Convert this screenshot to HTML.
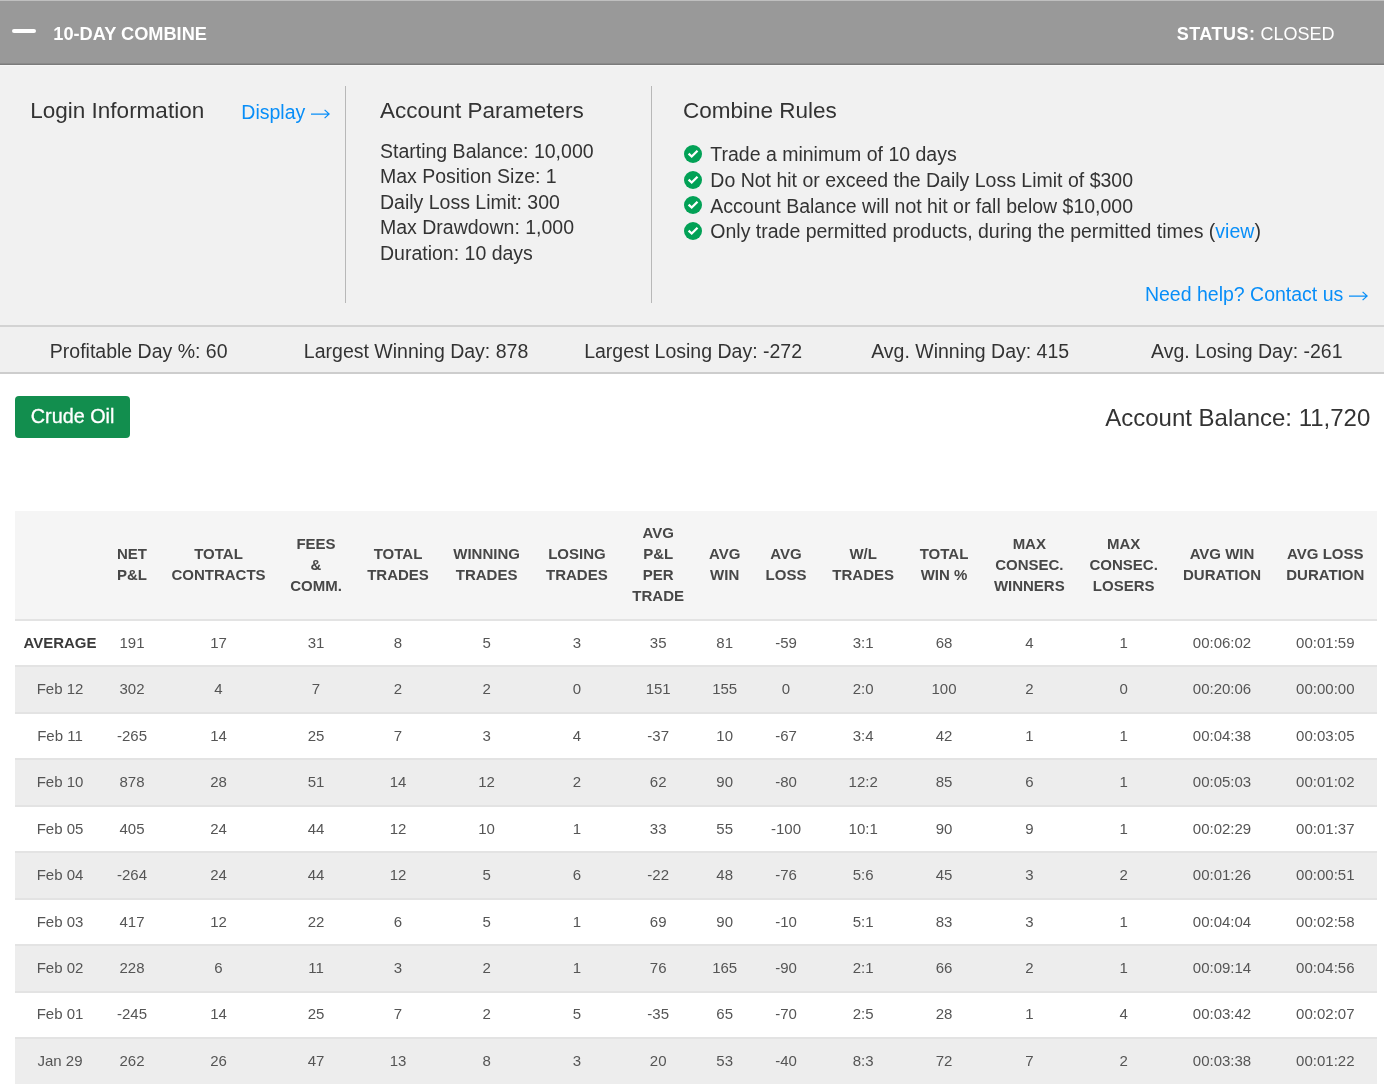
<!DOCTYPE html>
<html><head><meta charset="utf-8"><style>
html,body{margin:0;padding:0;}
body{width:1384px;height:1086px;position:relative;overflow:hidden;background:#fff;font-family:"Liberation Sans",sans-serif;-webkit-font-smoothing:antialiased;}
#root{position:absolute;left:0;top:0;width:1384px;height:1086px;will-change:transform;}
.t{position:absolute;white-space:nowrap;}
.b{position:absolute;}
</style></head><body><div id="root">
<div class="b" style="left:0;top:0;width:1384px;height:1px;background:#bfbfbf"></div>
<div class="b" style="left:0;top:1px;width:1384px;height:63px;background:#999"></div>
<div class="b" style="left:0;top:63px;width:1384px;height:1px;background:#8a8a8a"></div>
<div class="b" style="left:0;top:64px;width:1384px;height:1px;background:#7b7b7b"></div>
<div class="b" style="left:0;top:65px;width:1384px;height:260px;background:#f1f1f1"></div>
<div class="b" style="left:0;top:65px;width:1384px;height:1px;background:#f7f7f7"></div>
<div class="b" style="left:0;top:325px;width:1384px;height:2px;background:#d3d3d3"></div>
<div class="b" style="left:0;top:327px;width:1384px;height:45px;background:#f0f0f0"></div>
<div class="b" style="left:0;top:372px;width:1384px;height:2px;background:#cdcdcd"></div>
<div class="b" style="left:12px;top:28.6px;width:24px;height:4.5px;border-radius:2.25px;background:#fff"></div>
<div class="t" style="top:22.79px;font-size:18.2px;line-height:23px;color:#fff;font-weight:bold;left:53.30px;">10-DAY COMBINE</div>
<div class="t" style="top:22.76px;font-size:18px;line-height:22px;color:#fff;left:734.50px;width:600px;text-align:right;"><b style="letter-spacing:0.5px">STATUS:</b> CLOSED</div>
<div class="b" style="left:345px;top:86px;width:1px;height:217px;background:#b8b8b8"></div>
<div class="b" style="left:651px;top:86px;width:1px;height:217px;background:#b8b8b8"></div>
<div class="t" style="top:96.70px;font-size:22.5px;line-height:28px;color:#333;left:30.30px;">Login Information</div>
<div class="t" style="top:99.74px;font-size:19.5px;line-height:24px;color:#088ef8;left:241.30px;">Display</div>
<svg class="b" style="left:311.20px;top:108.70px" width="19" height="10" viewBox="0 0 19 10"><path d="M0 5H18.2M13.6 0.9L18.2 5L13.6 9.1" fill="none" stroke="#088ef8" stroke-width="1.25"/></svg>
<div class="t" style="top:96.70px;font-size:22.5px;line-height:28px;color:#333;left:380.00px;">Account Parameters</div>
<div class="t" style="top:96.70px;font-size:22.5px;line-height:28px;color:#333;left:683.00px;">Combine Rules</div>
<div class="t" style="top:138.54px;font-size:19.5px;line-height:24px;color:#333;left:380.00px;">Starting Balance: 10,000</div>
<div class="t" style="top:164.04px;font-size:19.5px;line-height:24px;color:#333;left:380.00px;">Max Position Size: 1</div>
<div class="t" style="top:189.54px;font-size:19.5px;line-height:24px;color:#333;left:380.00px;">Daily Loss Limit: 300</div>
<div class="t" style="top:215.04px;font-size:19.5px;line-height:24px;color:#333;left:380.00px;">Max Drawdown: 1,000</div>
<div class="t" style="top:240.54px;font-size:19.5px;line-height:24px;color:#333;left:380.00px;">Duration: 10 days</div>
<svg class="b" style="left:684.1px;top:144.90px" width="18" height="18" viewBox="0 0 18 18"><circle cx="9" cy="9" r="9" fill="#02a156"/><path d="M4.6 8.6 L7.7 11.5 L13.5 5.7" fill="none" stroke="#fff" stroke-width="2.3"/></svg>
<div class="t" style="top:142.24px;font-size:19.5px;line-height:24px;color:#333;left:710.30px;">Trade a minimum of 10 days</div>
<svg class="b" style="left:684.1px;top:170.57px" width="18" height="18" viewBox="0 0 18 18"><circle cx="9" cy="9" r="9" fill="#02a156"/><path d="M4.6 8.6 L7.7 11.5 L13.5 5.7" fill="none" stroke="#fff" stroke-width="2.3"/></svg>
<div class="t" style="top:167.91px;font-size:19.5px;line-height:24px;color:#333;left:710.30px;">Do Not hit or exceed the Daily Loss Limit of $300</div>
<svg class="b" style="left:684.1px;top:196.24px" width="18" height="18" viewBox="0 0 18 18"><circle cx="9" cy="9" r="9" fill="#02a156"/><path d="M4.6 8.6 L7.7 11.5 L13.5 5.7" fill="none" stroke="#fff" stroke-width="2.3"/></svg>
<div class="t" style="top:193.58px;font-size:19.5px;line-height:24px;color:#333;left:710.30px;">Account Balance will not hit or fall below $10,000</div>
<svg class="b" style="left:684.1px;top:221.91px" width="18" height="18" viewBox="0 0 18 18"><circle cx="9" cy="9" r="9" fill="#02a156"/><path d="M4.6 8.6 L7.7 11.5 L13.5 5.7" fill="none" stroke="#fff" stroke-width="2.3"/></svg>
<div class="t" style="top:219.25px;font-size:19.5px;line-height:24px;color:#333;left:710.30px;">Only trade permitted products, during the permitted times (<span style="color:#088ef8">view</span>)</div>
<div class="t" style="top:281.84px;font-size:19.5px;line-height:24px;color:#088ef8;left:743.30px;width:600px;text-align:right;">Need help? Contact us</div>
<svg class="b" style="left:1349.10px;top:290.80px" width="19" height="10" viewBox="0 0 19 10"><path d="M0 5H18.2M13.6 0.9L18.2 5L13.6 9.1" fill="none" stroke="#088ef8" stroke-width="1.25"/></svg>
<div class="t" style="top:339.24px;font-size:19.5px;line-height:24px;color:#333;left:0.70px;width:276px;text-align:center;">Profitable Day %: 60</div>
<div class="t" style="top:339.24px;font-size:19.5px;line-height:24px;color:#333;left:278.05px;width:276px;text-align:center;">Largest Winning Day: 878</div>
<div class="t" style="top:339.24px;font-size:19.5px;line-height:24px;color:#333;left:555.10px;width:276px;text-align:center;">Largest Losing Day: -272</div>
<div class="t" style="top:339.24px;font-size:19.5px;line-height:24px;color:#333;left:832.15px;width:276px;text-align:center;">Avg. Winning Day: 415</div>
<div class="t" style="top:339.24px;font-size:19.5px;line-height:24px;color:#333;left:1108.80px;width:276px;text-align:center;">Avg. Losing Day: -261</div>
<div class="b" style="left:15px;top:396px;width:115px;height:42px;border-radius:4px;background:#128e4e"></div>
<div class="t" style="top:404.34px;font-size:19.8px;line-height:25px;color:#fff;left:15.10px;width:115px;text-align:center;-webkit-text-stroke:0.3px #fff;">Crude Oil</div>
<div class="t" style="top:403.08px;font-size:24px;line-height:30px;color:#333;left:770.30px;width:600px;text-align:right;">Account Balance: 11,720</div>
<div class="b" style="left:15px;top:511px;width:1362px;height:108px;background:#f5f5f5"></div>
<div class="t" style="top:544.20px;font-size:15px;line-height:19px;color:#474747;font-weight:bold;left:72.00px;width:120px;text-align:center;">NET</div>
<div class="t" style="top:565.20px;font-size:15px;line-height:19px;color:#474747;font-weight:bold;left:72.00px;width:120px;text-align:center;">P&amp;L</div>
<div class="t" style="top:544.20px;font-size:15px;line-height:19px;color:#474747;font-weight:bold;left:158.50px;width:120px;text-align:center;">TOTAL</div>
<div class="t" style="top:565.20px;font-size:15px;line-height:19px;color:#474747;font-weight:bold;left:158.50px;width:120px;text-align:center;">CONTRACTS</div>
<div class="t" style="top:533.70px;font-size:15px;line-height:19px;color:#474747;font-weight:bold;left:256.00px;width:120px;text-align:center;">FEES</div>
<div class="t" style="top:554.70px;font-size:15px;line-height:19px;color:#474747;font-weight:bold;left:256.00px;width:120px;text-align:center;">&amp;</div>
<div class="t" style="top:575.70px;font-size:15px;line-height:19px;color:#474747;font-weight:bold;left:256.00px;width:120px;text-align:center;">COMM.</div>
<div class="t" style="top:544.20px;font-size:15px;line-height:19px;color:#474747;font-weight:bold;left:338.00px;width:120px;text-align:center;">TOTAL</div>
<div class="t" style="top:565.20px;font-size:15px;line-height:19px;color:#474747;font-weight:bold;left:338.00px;width:120px;text-align:center;">TRADES</div>
<div class="t" style="top:544.20px;font-size:15px;line-height:19px;color:#474747;font-weight:bold;left:426.60px;width:120px;text-align:center;">WINNING</div>
<div class="t" style="top:565.20px;font-size:15px;line-height:19px;color:#474747;font-weight:bold;left:426.60px;width:120px;text-align:center;">TRADES</div>
<div class="t" style="top:544.20px;font-size:15px;line-height:19px;color:#474747;font-weight:bold;left:516.90px;width:120px;text-align:center;">LOSING</div>
<div class="t" style="top:565.20px;font-size:15px;line-height:19px;color:#474747;font-weight:bold;left:516.90px;width:120px;text-align:center;">TRADES</div>
<div class="t" style="top:523.20px;font-size:15px;line-height:19px;color:#474747;font-weight:bold;left:598.20px;width:120px;text-align:center;">AVG</div>
<div class="t" style="top:544.20px;font-size:15px;line-height:19px;color:#474747;font-weight:bold;left:598.20px;width:120px;text-align:center;">P&amp;L</div>
<div class="t" style="top:565.20px;font-size:15px;line-height:19px;color:#474747;font-weight:bold;left:598.20px;width:120px;text-align:center;">PER</div>
<div class="t" style="top:586.20px;font-size:15px;line-height:19px;color:#474747;font-weight:bold;left:598.20px;width:120px;text-align:center;">TRADE</div>
<div class="t" style="top:544.20px;font-size:15px;line-height:19px;color:#474747;font-weight:bold;left:664.70px;width:120px;text-align:center;">AVG</div>
<div class="t" style="top:565.20px;font-size:15px;line-height:19px;color:#474747;font-weight:bold;left:664.70px;width:120px;text-align:center;">WIN</div>
<div class="t" style="top:544.20px;font-size:15px;line-height:19px;color:#474747;font-weight:bold;left:726.00px;width:120px;text-align:center;">AVG</div>
<div class="t" style="top:565.20px;font-size:15px;line-height:19px;color:#474747;font-weight:bold;left:726.00px;width:120px;text-align:center;">LOSS</div>
<div class="t" style="top:544.20px;font-size:15px;line-height:19px;color:#474747;font-weight:bold;left:803.20px;width:120px;text-align:center;">W/L</div>
<div class="t" style="top:565.20px;font-size:15px;line-height:19px;color:#474747;font-weight:bold;left:803.20px;width:120px;text-align:center;">TRADES</div>
<div class="t" style="top:544.20px;font-size:15px;line-height:19px;color:#474747;font-weight:bold;left:884.00px;width:120px;text-align:center;">TOTAL</div>
<div class="t" style="top:565.20px;font-size:15px;line-height:19px;color:#474747;font-weight:bold;left:884.00px;width:120px;text-align:center;">WIN %</div>
<div class="t" style="top:533.70px;font-size:15px;line-height:19px;color:#474747;font-weight:bold;left:969.30px;width:120px;text-align:center;">MAX</div>
<div class="t" style="top:554.70px;font-size:15px;line-height:19px;color:#474747;font-weight:bold;left:969.30px;width:120px;text-align:center;">CONSEC.</div>
<div class="t" style="top:575.70px;font-size:15px;line-height:19px;color:#474747;font-weight:bold;left:969.30px;width:120px;text-align:center;">WINNERS</div>
<div class="t" style="top:533.70px;font-size:15px;line-height:19px;color:#474747;font-weight:bold;left:1063.70px;width:120px;text-align:center;">MAX</div>
<div class="t" style="top:554.70px;font-size:15px;line-height:19px;color:#474747;font-weight:bold;left:1063.70px;width:120px;text-align:center;">CONSEC.</div>
<div class="t" style="top:575.70px;font-size:15px;line-height:19px;color:#474747;font-weight:bold;left:1063.70px;width:120px;text-align:center;">LOSERS</div>
<div class="t" style="top:544.20px;font-size:15px;line-height:19px;color:#474747;font-weight:bold;left:1162.00px;width:120px;text-align:center;">AVG WIN</div>
<div class="t" style="top:565.20px;font-size:15px;line-height:19px;color:#474747;font-weight:bold;left:1162.00px;width:120px;text-align:center;">DURATION</div>
<div class="t" style="top:544.20px;font-size:15px;line-height:19px;color:#474747;font-weight:bold;left:1265.30px;width:120px;text-align:center;">AVG LOSS</div>
<div class="t" style="top:565.20px;font-size:15px;line-height:19px;color:#474747;font-weight:bold;left:1265.30px;width:120px;text-align:center;">DURATION</div>
<div class="b" style="left:15px;top:619px;width:1362px;height:2px;background:#e3e3e3"></div>
<div class="b" style="left:15px;top:621px;width:1362px;height:44px;background:#fff"></div>
<div class="t" style="top:632.70px;font-size:15px;line-height:19px;color:#3a3a3a;font-weight:bold;left:0.00px;width:120px;text-align:center;">AVERAGE</div>
<div class="t" style="top:632.70px;font-size:15px;line-height:19px;color:#555;left:72.00px;width:120px;text-align:center;">191</div>
<div class="t" style="top:632.70px;font-size:15px;line-height:19px;color:#555;left:158.50px;width:120px;text-align:center;">17</div>
<div class="t" style="top:632.70px;font-size:15px;line-height:19px;color:#555;left:256.00px;width:120px;text-align:center;">31</div>
<div class="t" style="top:632.70px;font-size:15px;line-height:19px;color:#555;left:338.00px;width:120px;text-align:center;">8</div>
<div class="t" style="top:632.70px;font-size:15px;line-height:19px;color:#555;left:426.60px;width:120px;text-align:center;">5</div>
<div class="t" style="top:632.70px;font-size:15px;line-height:19px;color:#555;left:516.90px;width:120px;text-align:center;">3</div>
<div class="t" style="top:632.70px;font-size:15px;line-height:19px;color:#555;left:598.20px;width:120px;text-align:center;">35</div>
<div class="t" style="top:632.70px;font-size:15px;line-height:19px;color:#555;left:664.70px;width:120px;text-align:center;">81</div>
<div class="t" style="top:632.70px;font-size:15px;line-height:19px;color:#555;left:726.00px;width:120px;text-align:center;">-59</div>
<div class="t" style="top:632.70px;font-size:15px;line-height:19px;color:#555;left:803.20px;width:120px;text-align:center;">3:1</div>
<div class="t" style="top:632.70px;font-size:15px;line-height:19px;color:#555;left:884.00px;width:120px;text-align:center;">68</div>
<div class="t" style="top:632.70px;font-size:15px;line-height:19px;color:#555;left:969.30px;width:120px;text-align:center;">4</div>
<div class="t" style="top:632.70px;font-size:15px;line-height:19px;color:#555;left:1063.70px;width:120px;text-align:center;">1</div>
<div class="t" style="top:632.70px;font-size:15px;line-height:19px;color:#555;left:1162.00px;width:120px;text-align:center;">00:06:02</div>
<div class="t" style="top:632.70px;font-size:15px;line-height:19px;color:#555;left:1265.30px;width:120px;text-align:center;">00:01:59</div>
<div class="b" style="left:15px;top:665px;width:1362px;height:2px;background:#e3e3e3"></div>
<div class="b" style="left:15px;top:667px;width:1362px;height:45px;background:#ededed"></div>
<div class="t" style="top:679.17px;font-size:15px;line-height:19px;color:#555;left:0.00px;width:120px;text-align:center;">Feb 12</div>
<div class="t" style="top:679.17px;font-size:15px;line-height:19px;color:#555;left:72.00px;width:120px;text-align:center;">302</div>
<div class="t" style="top:679.17px;font-size:15px;line-height:19px;color:#555;left:158.50px;width:120px;text-align:center;">4</div>
<div class="t" style="top:679.17px;font-size:15px;line-height:19px;color:#555;left:256.00px;width:120px;text-align:center;">7</div>
<div class="t" style="top:679.17px;font-size:15px;line-height:19px;color:#555;left:338.00px;width:120px;text-align:center;">2</div>
<div class="t" style="top:679.17px;font-size:15px;line-height:19px;color:#555;left:426.60px;width:120px;text-align:center;">2</div>
<div class="t" style="top:679.17px;font-size:15px;line-height:19px;color:#555;left:516.90px;width:120px;text-align:center;">0</div>
<div class="t" style="top:679.17px;font-size:15px;line-height:19px;color:#555;left:598.20px;width:120px;text-align:center;">151</div>
<div class="t" style="top:679.17px;font-size:15px;line-height:19px;color:#555;left:664.70px;width:120px;text-align:center;">155</div>
<div class="t" style="top:679.17px;font-size:15px;line-height:19px;color:#555;left:726.00px;width:120px;text-align:center;">0</div>
<div class="t" style="top:679.17px;font-size:15px;line-height:19px;color:#555;left:803.20px;width:120px;text-align:center;">2:0</div>
<div class="t" style="top:679.17px;font-size:15px;line-height:19px;color:#555;left:884.00px;width:120px;text-align:center;">100</div>
<div class="t" style="top:679.17px;font-size:15px;line-height:19px;color:#555;left:969.30px;width:120px;text-align:center;">2</div>
<div class="t" style="top:679.17px;font-size:15px;line-height:19px;color:#555;left:1063.70px;width:120px;text-align:center;">0</div>
<div class="t" style="top:679.17px;font-size:15px;line-height:19px;color:#555;left:1162.00px;width:120px;text-align:center;">00:20:06</div>
<div class="t" style="top:679.17px;font-size:15px;line-height:19px;color:#555;left:1265.30px;width:120px;text-align:center;">00:00:00</div>
<div class="b" style="left:15px;top:712px;width:1362px;height:2px;background:#e3e3e3"></div>
<div class="b" style="left:15px;top:714px;width:1362px;height:44px;background:#fff"></div>
<div class="t" style="top:725.64px;font-size:15px;line-height:19px;color:#555;left:0.00px;width:120px;text-align:center;">Feb 11</div>
<div class="t" style="top:725.64px;font-size:15px;line-height:19px;color:#555;left:72.00px;width:120px;text-align:center;">-265</div>
<div class="t" style="top:725.64px;font-size:15px;line-height:19px;color:#555;left:158.50px;width:120px;text-align:center;">14</div>
<div class="t" style="top:725.64px;font-size:15px;line-height:19px;color:#555;left:256.00px;width:120px;text-align:center;">25</div>
<div class="t" style="top:725.64px;font-size:15px;line-height:19px;color:#555;left:338.00px;width:120px;text-align:center;">7</div>
<div class="t" style="top:725.64px;font-size:15px;line-height:19px;color:#555;left:426.60px;width:120px;text-align:center;">3</div>
<div class="t" style="top:725.64px;font-size:15px;line-height:19px;color:#555;left:516.90px;width:120px;text-align:center;">4</div>
<div class="t" style="top:725.64px;font-size:15px;line-height:19px;color:#555;left:598.20px;width:120px;text-align:center;">-37</div>
<div class="t" style="top:725.64px;font-size:15px;line-height:19px;color:#555;left:664.70px;width:120px;text-align:center;">10</div>
<div class="t" style="top:725.64px;font-size:15px;line-height:19px;color:#555;left:726.00px;width:120px;text-align:center;">-67</div>
<div class="t" style="top:725.64px;font-size:15px;line-height:19px;color:#555;left:803.20px;width:120px;text-align:center;">3:4</div>
<div class="t" style="top:725.64px;font-size:15px;line-height:19px;color:#555;left:884.00px;width:120px;text-align:center;">42</div>
<div class="t" style="top:725.64px;font-size:15px;line-height:19px;color:#555;left:969.30px;width:120px;text-align:center;">1</div>
<div class="t" style="top:725.64px;font-size:15px;line-height:19px;color:#555;left:1063.70px;width:120px;text-align:center;">1</div>
<div class="t" style="top:725.64px;font-size:15px;line-height:19px;color:#555;left:1162.00px;width:120px;text-align:center;">00:04:38</div>
<div class="t" style="top:725.64px;font-size:15px;line-height:19px;color:#555;left:1265.30px;width:120px;text-align:center;">00:03:05</div>
<div class="b" style="left:15px;top:758px;width:1362px;height:2px;background:#e3e3e3"></div>
<div class="b" style="left:15px;top:760px;width:1362px;height:45px;background:#ededed"></div>
<div class="t" style="top:772.11px;font-size:15px;line-height:19px;color:#555;left:0.00px;width:120px;text-align:center;">Feb 10</div>
<div class="t" style="top:772.11px;font-size:15px;line-height:19px;color:#555;left:72.00px;width:120px;text-align:center;">878</div>
<div class="t" style="top:772.11px;font-size:15px;line-height:19px;color:#555;left:158.50px;width:120px;text-align:center;">28</div>
<div class="t" style="top:772.11px;font-size:15px;line-height:19px;color:#555;left:256.00px;width:120px;text-align:center;">51</div>
<div class="t" style="top:772.11px;font-size:15px;line-height:19px;color:#555;left:338.00px;width:120px;text-align:center;">14</div>
<div class="t" style="top:772.11px;font-size:15px;line-height:19px;color:#555;left:426.60px;width:120px;text-align:center;">12</div>
<div class="t" style="top:772.11px;font-size:15px;line-height:19px;color:#555;left:516.90px;width:120px;text-align:center;">2</div>
<div class="t" style="top:772.11px;font-size:15px;line-height:19px;color:#555;left:598.20px;width:120px;text-align:center;">62</div>
<div class="t" style="top:772.11px;font-size:15px;line-height:19px;color:#555;left:664.70px;width:120px;text-align:center;">90</div>
<div class="t" style="top:772.11px;font-size:15px;line-height:19px;color:#555;left:726.00px;width:120px;text-align:center;">-80</div>
<div class="t" style="top:772.11px;font-size:15px;line-height:19px;color:#555;left:803.20px;width:120px;text-align:center;">12:2</div>
<div class="t" style="top:772.11px;font-size:15px;line-height:19px;color:#555;left:884.00px;width:120px;text-align:center;">85</div>
<div class="t" style="top:772.11px;font-size:15px;line-height:19px;color:#555;left:969.30px;width:120px;text-align:center;">6</div>
<div class="t" style="top:772.11px;font-size:15px;line-height:19px;color:#555;left:1063.70px;width:120px;text-align:center;">1</div>
<div class="t" style="top:772.11px;font-size:15px;line-height:19px;color:#555;left:1162.00px;width:120px;text-align:center;">00:05:03</div>
<div class="t" style="top:772.11px;font-size:15px;line-height:19px;color:#555;left:1265.30px;width:120px;text-align:center;">00:01:02</div>
<div class="b" style="left:15px;top:805px;width:1362px;height:2px;background:#e3e3e3"></div>
<div class="b" style="left:15px;top:807px;width:1362px;height:44px;background:#fff"></div>
<div class="t" style="top:818.58px;font-size:15px;line-height:19px;color:#555;left:0.00px;width:120px;text-align:center;">Feb 05</div>
<div class="t" style="top:818.58px;font-size:15px;line-height:19px;color:#555;left:72.00px;width:120px;text-align:center;">405</div>
<div class="t" style="top:818.58px;font-size:15px;line-height:19px;color:#555;left:158.50px;width:120px;text-align:center;">24</div>
<div class="t" style="top:818.58px;font-size:15px;line-height:19px;color:#555;left:256.00px;width:120px;text-align:center;">44</div>
<div class="t" style="top:818.58px;font-size:15px;line-height:19px;color:#555;left:338.00px;width:120px;text-align:center;">12</div>
<div class="t" style="top:818.58px;font-size:15px;line-height:19px;color:#555;left:426.60px;width:120px;text-align:center;">10</div>
<div class="t" style="top:818.58px;font-size:15px;line-height:19px;color:#555;left:516.90px;width:120px;text-align:center;">1</div>
<div class="t" style="top:818.58px;font-size:15px;line-height:19px;color:#555;left:598.20px;width:120px;text-align:center;">33</div>
<div class="t" style="top:818.58px;font-size:15px;line-height:19px;color:#555;left:664.70px;width:120px;text-align:center;">55</div>
<div class="t" style="top:818.58px;font-size:15px;line-height:19px;color:#555;left:726.00px;width:120px;text-align:center;">-100</div>
<div class="t" style="top:818.58px;font-size:15px;line-height:19px;color:#555;left:803.20px;width:120px;text-align:center;">10:1</div>
<div class="t" style="top:818.58px;font-size:15px;line-height:19px;color:#555;left:884.00px;width:120px;text-align:center;">90</div>
<div class="t" style="top:818.58px;font-size:15px;line-height:19px;color:#555;left:969.30px;width:120px;text-align:center;">9</div>
<div class="t" style="top:818.58px;font-size:15px;line-height:19px;color:#555;left:1063.70px;width:120px;text-align:center;">1</div>
<div class="t" style="top:818.58px;font-size:15px;line-height:19px;color:#555;left:1162.00px;width:120px;text-align:center;">00:02:29</div>
<div class="t" style="top:818.58px;font-size:15px;line-height:19px;color:#555;left:1265.30px;width:120px;text-align:center;">00:01:37</div>
<div class="b" style="left:15px;top:851px;width:1362px;height:2px;background:#e3e3e3"></div>
<div class="b" style="left:15px;top:853px;width:1362px;height:45px;background:#ededed"></div>
<div class="t" style="top:865.05px;font-size:15px;line-height:19px;color:#555;left:0.00px;width:120px;text-align:center;">Feb 04</div>
<div class="t" style="top:865.05px;font-size:15px;line-height:19px;color:#555;left:72.00px;width:120px;text-align:center;">-264</div>
<div class="t" style="top:865.05px;font-size:15px;line-height:19px;color:#555;left:158.50px;width:120px;text-align:center;">24</div>
<div class="t" style="top:865.05px;font-size:15px;line-height:19px;color:#555;left:256.00px;width:120px;text-align:center;">44</div>
<div class="t" style="top:865.05px;font-size:15px;line-height:19px;color:#555;left:338.00px;width:120px;text-align:center;">12</div>
<div class="t" style="top:865.05px;font-size:15px;line-height:19px;color:#555;left:426.60px;width:120px;text-align:center;">5</div>
<div class="t" style="top:865.05px;font-size:15px;line-height:19px;color:#555;left:516.90px;width:120px;text-align:center;">6</div>
<div class="t" style="top:865.05px;font-size:15px;line-height:19px;color:#555;left:598.20px;width:120px;text-align:center;">-22</div>
<div class="t" style="top:865.05px;font-size:15px;line-height:19px;color:#555;left:664.70px;width:120px;text-align:center;">48</div>
<div class="t" style="top:865.05px;font-size:15px;line-height:19px;color:#555;left:726.00px;width:120px;text-align:center;">-76</div>
<div class="t" style="top:865.05px;font-size:15px;line-height:19px;color:#555;left:803.20px;width:120px;text-align:center;">5:6</div>
<div class="t" style="top:865.05px;font-size:15px;line-height:19px;color:#555;left:884.00px;width:120px;text-align:center;">45</div>
<div class="t" style="top:865.05px;font-size:15px;line-height:19px;color:#555;left:969.30px;width:120px;text-align:center;">3</div>
<div class="t" style="top:865.05px;font-size:15px;line-height:19px;color:#555;left:1063.70px;width:120px;text-align:center;">2</div>
<div class="t" style="top:865.05px;font-size:15px;line-height:19px;color:#555;left:1162.00px;width:120px;text-align:center;">00:01:26</div>
<div class="t" style="top:865.05px;font-size:15px;line-height:19px;color:#555;left:1265.30px;width:120px;text-align:center;">00:00:51</div>
<div class="b" style="left:15px;top:898px;width:1362px;height:2px;background:#e3e3e3"></div>
<div class="b" style="left:15px;top:900px;width:1362px;height:44px;background:#fff"></div>
<div class="t" style="top:911.52px;font-size:15px;line-height:19px;color:#555;left:0.00px;width:120px;text-align:center;">Feb 03</div>
<div class="t" style="top:911.52px;font-size:15px;line-height:19px;color:#555;left:72.00px;width:120px;text-align:center;">417</div>
<div class="t" style="top:911.52px;font-size:15px;line-height:19px;color:#555;left:158.50px;width:120px;text-align:center;">12</div>
<div class="t" style="top:911.52px;font-size:15px;line-height:19px;color:#555;left:256.00px;width:120px;text-align:center;">22</div>
<div class="t" style="top:911.52px;font-size:15px;line-height:19px;color:#555;left:338.00px;width:120px;text-align:center;">6</div>
<div class="t" style="top:911.52px;font-size:15px;line-height:19px;color:#555;left:426.60px;width:120px;text-align:center;">5</div>
<div class="t" style="top:911.52px;font-size:15px;line-height:19px;color:#555;left:516.90px;width:120px;text-align:center;">1</div>
<div class="t" style="top:911.52px;font-size:15px;line-height:19px;color:#555;left:598.20px;width:120px;text-align:center;">69</div>
<div class="t" style="top:911.52px;font-size:15px;line-height:19px;color:#555;left:664.70px;width:120px;text-align:center;">90</div>
<div class="t" style="top:911.52px;font-size:15px;line-height:19px;color:#555;left:726.00px;width:120px;text-align:center;">-10</div>
<div class="t" style="top:911.52px;font-size:15px;line-height:19px;color:#555;left:803.20px;width:120px;text-align:center;">5:1</div>
<div class="t" style="top:911.52px;font-size:15px;line-height:19px;color:#555;left:884.00px;width:120px;text-align:center;">83</div>
<div class="t" style="top:911.52px;font-size:15px;line-height:19px;color:#555;left:969.30px;width:120px;text-align:center;">3</div>
<div class="t" style="top:911.52px;font-size:15px;line-height:19px;color:#555;left:1063.70px;width:120px;text-align:center;">1</div>
<div class="t" style="top:911.52px;font-size:15px;line-height:19px;color:#555;left:1162.00px;width:120px;text-align:center;">00:04:04</div>
<div class="t" style="top:911.52px;font-size:15px;line-height:19px;color:#555;left:1265.30px;width:120px;text-align:center;">00:02:58</div>
<div class="b" style="left:15px;top:944px;width:1362px;height:2px;background:#e3e3e3"></div>
<div class="b" style="left:15px;top:946px;width:1362px;height:45px;background:#ededed"></div>
<div class="t" style="top:957.99px;font-size:15px;line-height:19px;color:#555;left:0.00px;width:120px;text-align:center;">Feb 02</div>
<div class="t" style="top:957.99px;font-size:15px;line-height:19px;color:#555;left:72.00px;width:120px;text-align:center;">228</div>
<div class="t" style="top:957.99px;font-size:15px;line-height:19px;color:#555;left:158.50px;width:120px;text-align:center;">6</div>
<div class="t" style="top:957.99px;font-size:15px;line-height:19px;color:#555;left:256.00px;width:120px;text-align:center;">11</div>
<div class="t" style="top:957.99px;font-size:15px;line-height:19px;color:#555;left:338.00px;width:120px;text-align:center;">3</div>
<div class="t" style="top:957.99px;font-size:15px;line-height:19px;color:#555;left:426.60px;width:120px;text-align:center;">2</div>
<div class="t" style="top:957.99px;font-size:15px;line-height:19px;color:#555;left:516.90px;width:120px;text-align:center;">1</div>
<div class="t" style="top:957.99px;font-size:15px;line-height:19px;color:#555;left:598.20px;width:120px;text-align:center;">76</div>
<div class="t" style="top:957.99px;font-size:15px;line-height:19px;color:#555;left:664.70px;width:120px;text-align:center;">165</div>
<div class="t" style="top:957.99px;font-size:15px;line-height:19px;color:#555;left:726.00px;width:120px;text-align:center;">-90</div>
<div class="t" style="top:957.99px;font-size:15px;line-height:19px;color:#555;left:803.20px;width:120px;text-align:center;">2:1</div>
<div class="t" style="top:957.99px;font-size:15px;line-height:19px;color:#555;left:884.00px;width:120px;text-align:center;">66</div>
<div class="t" style="top:957.99px;font-size:15px;line-height:19px;color:#555;left:969.30px;width:120px;text-align:center;">2</div>
<div class="t" style="top:957.99px;font-size:15px;line-height:19px;color:#555;left:1063.70px;width:120px;text-align:center;">1</div>
<div class="t" style="top:957.99px;font-size:15px;line-height:19px;color:#555;left:1162.00px;width:120px;text-align:center;">00:09:14</div>
<div class="t" style="top:957.99px;font-size:15px;line-height:19px;color:#555;left:1265.30px;width:120px;text-align:center;">00:04:56</div>
<div class="b" style="left:15px;top:991px;width:1362px;height:2px;background:#e3e3e3"></div>
<div class="b" style="left:15px;top:993px;width:1362px;height:44px;background:#fff"></div>
<div class="t" style="top:1004.46px;font-size:15px;line-height:19px;color:#555;left:0.00px;width:120px;text-align:center;">Feb 01</div>
<div class="t" style="top:1004.46px;font-size:15px;line-height:19px;color:#555;left:72.00px;width:120px;text-align:center;">-245</div>
<div class="t" style="top:1004.46px;font-size:15px;line-height:19px;color:#555;left:158.50px;width:120px;text-align:center;">14</div>
<div class="t" style="top:1004.46px;font-size:15px;line-height:19px;color:#555;left:256.00px;width:120px;text-align:center;">25</div>
<div class="t" style="top:1004.46px;font-size:15px;line-height:19px;color:#555;left:338.00px;width:120px;text-align:center;">7</div>
<div class="t" style="top:1004.46px;font-size:15px;line-height:19px;color:#555;left:426.60px;width:120px;text-align:center;">2</div>
<div class="t" style="top:1004.46px;font-size:15px;line-height:19px;color:#555;left:516.90px;width:120px;text-align:center;">5</div>
<div class="t" style="top:1004.46px;font-size:15px;line-height:19px;color:#555;left:598.20px;width:120px;text-align:center;">-35</div>
<div class="t" style="top:1004.46px;font-size:15px;line-height:19px;color:#555;left:664.70px;width:120px;text-align:center;">65</div>
<div class="t" style="top:1004.46px;font-size:15px;line-height:19px;color:#555;left:726.00px;width:120px;text-align:center;">-70</div>
<div class="t" style="top:1004.46px;font-size:15px;line-height:19px;color:#555;left:803.20px;width:120px;text-align:center;">2:5</div>
<div class="t" style="top:1004.46px;font-size:15px;line-height:19px;color:#555;left:884.00px;width:120px;text-align:center;">28</div>
<div class="t" style="top:1004.46px;font-size:15px;line-height:19px;color:#555;left:969.30px;width:120px;text-align:center;">1</div>
<div class="t" style="top:1004.46px;font-size:15px;line-height:19px;color:#555;left:1063.70px;width:120px;text-align:center;">4</div>
<div class="t" style="top:1004.46px;font-size:15px;line-height:19px;color:#555;left:1162.00px;width:120px;text-align:center;">00:03:42</div>
<div class="t" style="top:1004.46px;font-size:15px;line-height:19px;color:#555;left:1265.30px;width:120px;text-align:center;">00:02:07</div>
<div class="b" style="left:15px;top:1037px;width:1362px;height:2px;background:#e3e3e3"></div>
<div class="b" style="left:15px;top:1039px;width:1362px;height:45px;background:#ededed"></div>
<div class="t" style="top:1050.93px;font-size:15px;line-height:19px;color:#555;left:0.00px;width:120px;text-align:center;">Jan 29</div>
<div class="t" style="top:1050.93px;font-size:15px;line-height:19px;color:#555;left:72.00px;width:120px;text-align:center;">262</div>
<div class="t" style="top:1050.93px;font-size:15px;line-height:19px;color:#555;left:158.50px;width:120px;text-align:center;">26</div>
<div class="t" style="top:1050.93px;font-size:15px;line-height:19px;color:#555;left:256.00px;width:120px;text-align:center;">47</div>
<div class="t" style="top:1050.93px;font-size:15px;line-height:19px;color:#555;left:338.00px;width:120px;text-align:center;">13</div>
<div class="t" style="top:1050.93px;font-size:15px;line-height:19px;color:#555;left:426.60px;width:120px;text-align:center;">8</div>
<div class="t" style="top:1050.93px;font-size:15px;line-height:19px;color:#555;left:516.90px;width:120px;text-align:center;">3</div>
<div class="t" style="top:1050.93px;font-size:15px;line-height:19px;color:#555;left:598.20px;width:120px;text-align:center;">20</div>
<div class="t" style="top:1050.93px;font-size:15px;line-height:19px;color:#555;left:664.70px;width:120px;text-align:center;">53</div>
<div class="t" style="top:1050.93px;font-size:15px;line-height:19px;color:#555;left:726.00px;width:120px;text-align:center;">-40</div>
<div class="t" style="top:1050.93px;font-size:15px;line-height:19px;color:#555;left:803.20px;width:120px;text-align:center;">8:3</div>
<div class="t" style="top:1050.93px;font-size:15px;line-height:19px;color:#555;left:884.00px;width:120px;text-align:center;">72</div>
<div class="t" style="top:1050.93px;font-size:15px;line-height:19px;color:#555;left:969.30px;width:120px;text-align:center;">7</div>
<div class="t" style="top:1050.93px;font-size:15px;line-height:19px;color:#555;left:1063.70px;width:120px;text-align:center;">2</div>
<div class="t" style="top:1050.93px;font-size:15px;line-height:19px;color:#555;left:1162.00px;width:120px;text-align:center;">00:03:38</div>
<div class="t" style="top:1050.93px;font-size:15px;line-height:19px;color:#555;left:1265.30px;width:120px;text-align:center;">00:01:22</div>
</div></body></html>
